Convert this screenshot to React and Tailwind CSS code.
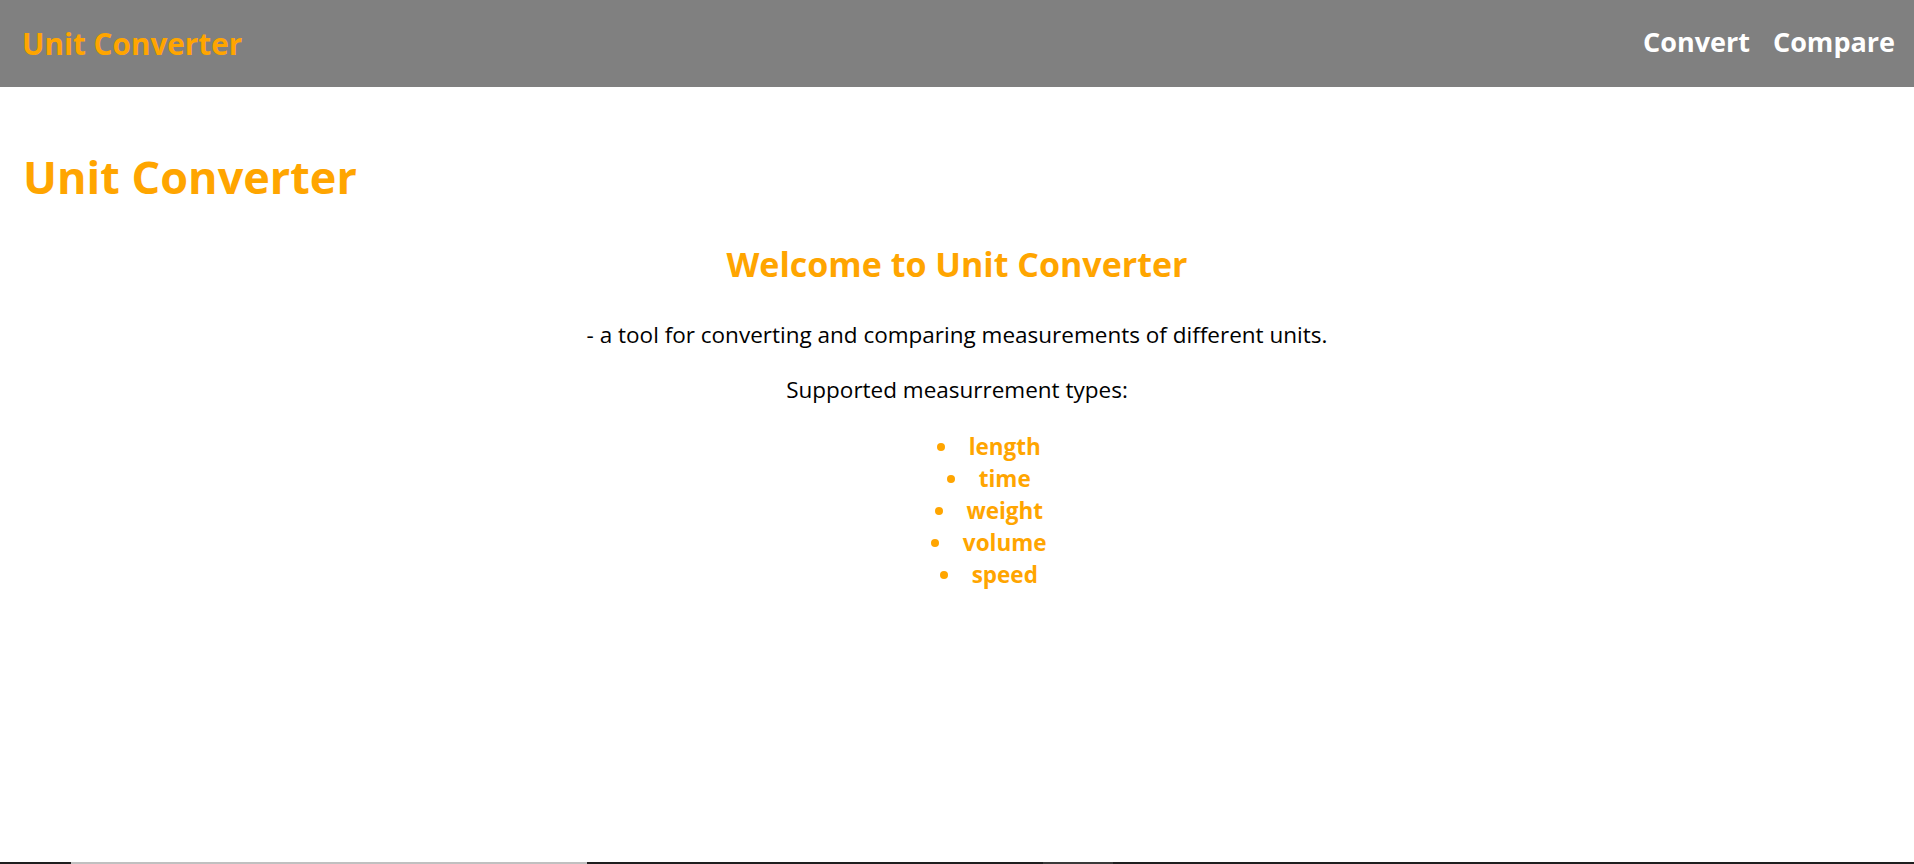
import React from "react";

const types = ["length", "time", "weight", "volume", "speed"];

export default function App() {
  return (
    <div className="min-h-screen flex flex-col bg-white font-['Open_Sans',sans-serif]">
      {/* Top bar */}
      <header className="h-[87px] bg-[#808080] flex items-center justify-between pl-[22px] pr-[19px]">
        <h1 className="text-[29.7px] font-bold text-[#ffa500] leading-none">Unit Converter</h1>
        <nav className="flex gap-[23px] -mt-[5px]">
          <a className="text-[27px] font-bold text-white leading-none">Convert</a>
          <a className="text-[27px] font-bold text-white leading-none">Compare</a>
        </nav>
      </header>

      <main className="flex-1">
        <h1 className="mt-[62px] pl-[23px] text-[45px] leading-[56px] font-bold text-[#ffa500]">
          Unit Converter
        </h1>

        <div className="text-center">
          <h2 className="mt-[37px] text-[34px] leading-[44px] font-bold text-[#ffa500]">
            Welcome to Unit Converter
          </h2>
          <p className="mt-[34px] text-[22.5px] leading-[30px] text-black">
            - a tool for converting and comparing measurements of different units.
          </p>
          <p className="mt-[25px] text-[22.5px] leading-[30px] text-black">
            Supported measurrement types:
          </p>
          <ul className="mt-[26px] pl-[64px] list-disc list-inside">
            {types.map((t) => (
              <li key={t} className="text-[22.5px] leading-[32px] font-bold text-[#ffa500]">
                {t}
              </li>
            ))}
          </ul>
        </div>
      </main>

      {/* scrollbar strip at the bottom */}
      <div className="h-[2px] flex bg-[#1f1f1f]">
        <div className="w-[71px]" />
        <div className="w-[516px] bg-[#c0c0c0]" />
        <div className="w-[456px]" />
        <div className="w-[70px] bg-[#3a3a3a]" />
      </div>
    </div>
  );
}
